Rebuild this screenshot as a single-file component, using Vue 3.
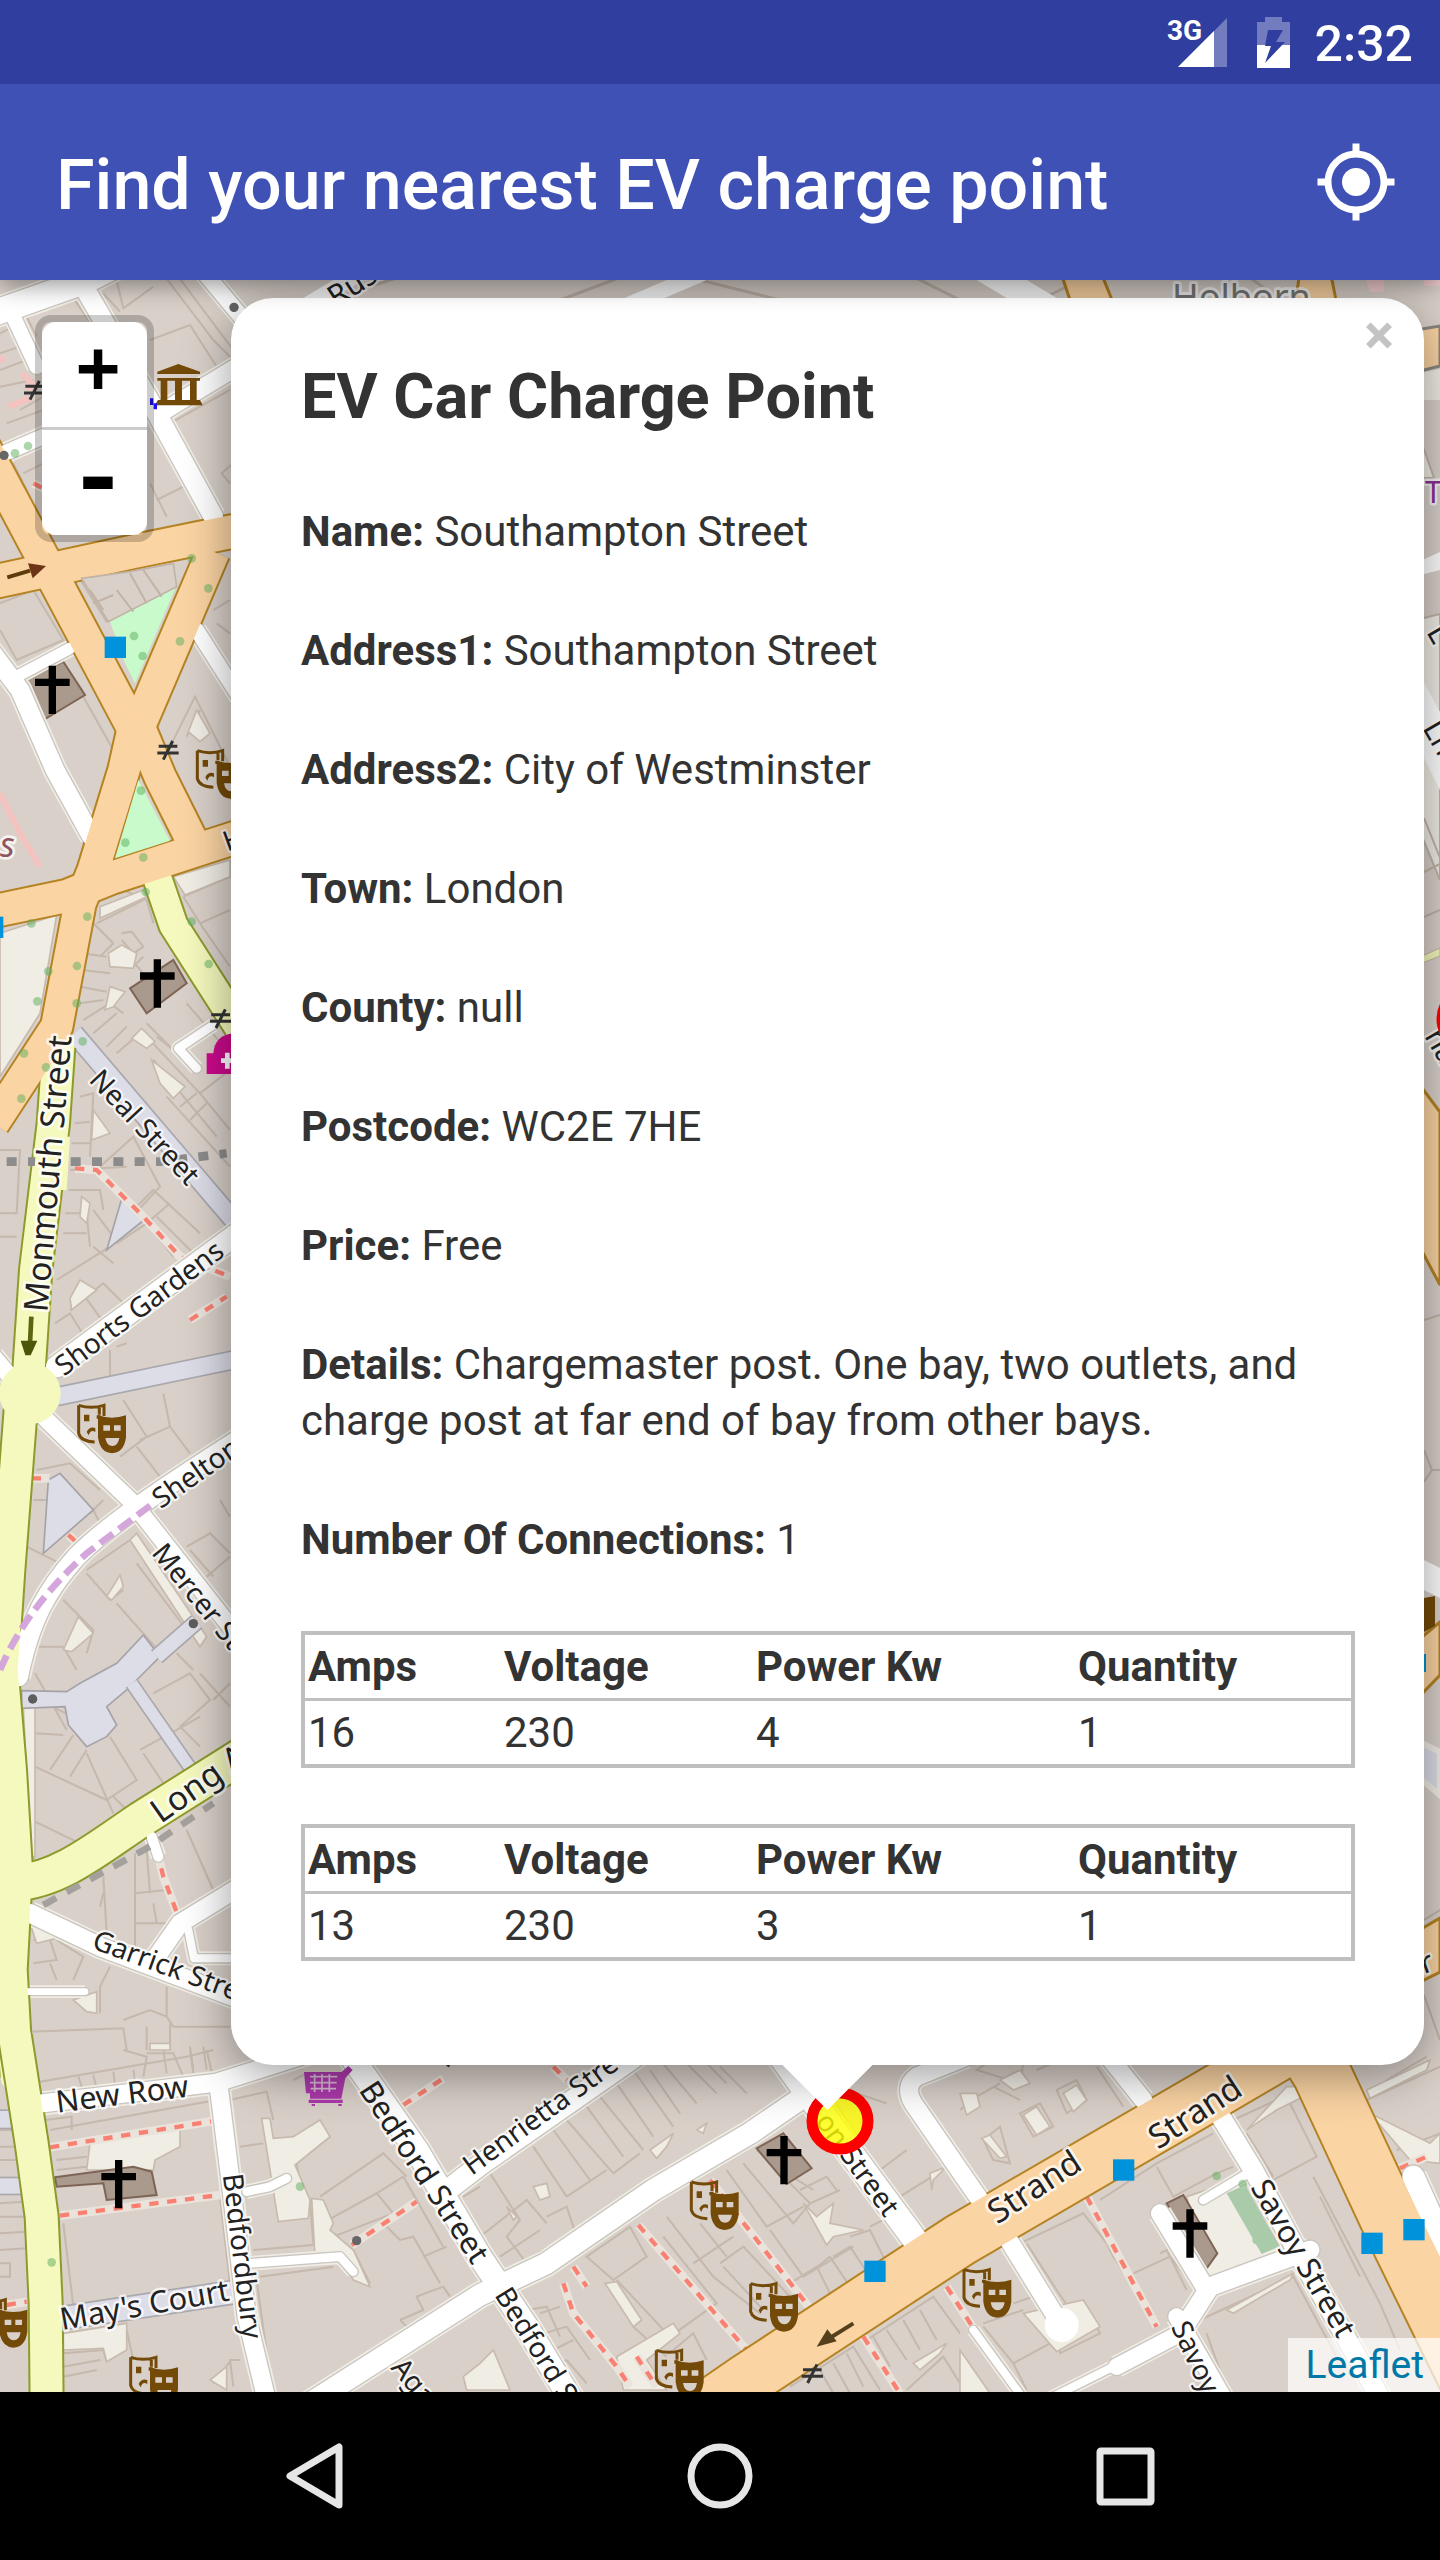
<script setup>
const fields = [
  { label: 'Name', value: 'Southampton Street' },
  { label: 'Address1', value: 'Southampton Street' },
  { label: 'Address2', value: 'City of Westminster' },
  { label: 'Town', value: 'London' },
  { label: 'County', value: 'null' },
  { label: 'Postcode', value: 'WC2E 7HE' },
  { label: 'Price', value: 'Free' },
  {
    label: 'Details',
    value: 'Chargemaster post. One bay, two outlets, and charge post at far end of bay from other bays.'
  },
  { label: 'Number Of Connections', value: '1' }
]

const connections = [
  { amps: 16, voltage: 230, power: 4, quantity: 1 },
  { amps: 13, voltage: 230, power: 3, quantity: 1 }
]

// Street geometry, in two sheets: the western strip and the southern strip.
const west = {
  plots: [
    'M80 140L220 85L330 240M80 140L110 200M270 60L440 -20M340 -10L370 115L460 50M310 70L360 125M450 210L570 165L650 290M480 0L640 210L700 270M520 0L700 240',
    'M0 190L40 170L90 260M0 250L60 230M0 300L80 270M0 350L100 330M60 420L130 380M20 460L130 420M70 610L130 580M40 580L90 680M450 640L500 740M470 690L570 640M510 460L610 680M510 460L690 360M700 580L665 610L690 640',
    'M245 935L310 925L325 960L380 950L410 1010L320 1055ZM280 1000L330 980M350 970L400 1030M390 910L440 1000M430 895L480 980M470 885L520 960M270 960L310 1010M640 1020L690 990M650 1060L690 1090',
    'M0 1000L100 960L190 1110L50 1170L0 1080M250 1280L340 1440M130 1350L190 1500M475 1500L585 1280L690 1490M560 1400L600 1320',
    'M300 1830L440 1890L460 1960M290 1960L430 1890M280 1960L340 2020M340 2020L300 2060M245 2050L320 2060M245 2100L330 2110M240 2150L320 2165M240 2200L310 2190M250 2250L330 2200L370 2230M280 2290L350 2230M320 2330L380 2270M350 2350L420 2290',
    'M365 1990L395 1985L430 2030L400 2050L365 2010M380 2050L470 2160M400 2090L430 2060M550 1880L690 1820M550 1880L600 1960L690 1920M600 1960L690 2090M0 2040L65 2050L60 2150L0 2400',
    'M440 2260L520 2340L470 2300M460 2370L650 2600M560 2200L690 2350M640 2330L690 2300M440 2300L600 2470L690 2400M600 2470L690 2580M500 2480L690 2690M540 2510L590 2470M570 2550L620 2500',
    'M240 2480L280 2470L270 2660M225 2560L270 2555M215 2620L270 2620M210 2700L380 2690M205 2760L300 2760L310 2820M195 2830L260 2830L270 2930M190 2890L260 2890M300 2690L400 2600L480 2750L340 2900L280 2820M0 2640L60 2640L50 2830L0 2830M0 2900L50 2900',
    'M400 2820L460 2760L600 2890M440 2860L510 2800M350 2920L440 2860L520 2960M280 2930L340 2980M470 2840L590 2960',
    'M170 3030L330 2930M210 3120L310 3040L390 3120M240 3060L320 3170M165 3160L210 3130L260 3210M330 3170L380 3110M330 3240L330 3330M350 3230L380 3220',
    'M370 3390L440 3500L360 3560M420 3510L510 3470L570 3550M410 3530L480 3620M490 3370L510 3470M310 3690L270 3730M100 3690L140 3690M110 3600L210 3580L300 3660M80 3830L180 3880M280 3720L310 3780M660 3690L690 3740M560 3830L630 3790L690 3850M620 3920L690 3860M570 3840L640 3920',
    'M260 3900L390 3810M260 3910L330 3990L370 3960M350 4000L500 4170M190 3990L280 4080L260 4150M110 4130L190 4130M190 4130L230 4200M410 3880L560 4080M530 4150L580 4200',
    'M105 4285L310 4385M105 4210L200 4380M105 4390L190 4395M150 4500L220 4395M210 4520L260 4440M260 4450L340 4630M330 4400L410 4530L320 4590M105 4490L320 4590M340 4580L380 4620M105 4655L240 4720M100 4290V4770',
    'M430 4450L490 4540M420 4440L530 4380L600 4340M460 4270L570 4210L630 4290L540 4370M600 4210L690 4310M640 4290L690 4240M540 4370L600 4430M560 4680L640 4860M405 4750V5050M440 4740L450 4870M405 4870L500 4860M460 4900L470 4960M405 4960L500 4960M310 4820L320 4990',
    'M310 4870L300 4910M100 5010L150 5010L170 5070L100 5080M170 5010L250 5060L220 5130M150 5080L170 5130M330 5090L300 5150L300 5230M500 5150V5240M90 5285L370 5275L380 5340M370 5250L450 5220L500 5240L520 5270H690M440 5270V5340M510 5260V5340M570 5330L580 5400M610 5330L620 5400'
  ],
  courts: [
    'M590 1320L630 1390L600 1415L565 1385Z', 'M325 2050L365 2025L410 2050L400 2095L330 2090Z', 'M330 2150L375 2165L340 2210L315 2220Z',
    'M395 2305L425 2275L465 2315L440 2335Z', 'M455 2370L555 2450L520 2485L480 2440Z', 'M280 2520L330 2590L275 2610Z',
    'M0 1990L170 1935L120 2230L0 2420ZM300 1910L430 1860L440 1880L300 1945Z', 'M520 1820L690 1770V1820L555 1875Z',
    'M210 3085L240 3030L290 3060L215 3120Z', 'M190 4140L235 4040L280 4090L215 4145Z', 'M320 3980L360 3915L370 3950L335 3990Z',
    'M220 5190L290 5165V5230L260 5225Z', 'M70 4310L105 4270V4760L90 4760Z', 'M90 4960L190 5000L110 5020Z',
    'M410 3790L620 4100L600 4130L390 3810Z', 'M245 2780L270 2800L260 2860L240 2840ZM450 5320H510V5340H450Z'
  ],
  ped: [
    { d: 'M222 2290L700 2850', w: 52 }, { d: 'M170 3380L700 3270', w: 50 }, { d: 'M395 4240L575 4500', w: 34 }, { d: 'M470 4160L590 4055', w: 42 }
  ],
  pedAreas: [
    'M145 3630L180 3610L280 3720L130 3850Z', 'M65 4262L200 4265L240 4240L350 4180L430 4095L480 4160L440 4200L380 4260L320 4310L350 4365L320 4400L260 4430L205 4365L195 4310L65 4315Z',
    'M370 2770L432 2850L320 2940Z'
  ],
  minor: [
    { d: 'M-20 130L250 35L400 -40', w: 76 }, { d: 'M40 140L110 290', w: 44 }, { d: 'M240 30L470 430L640 740', w: 58 }, { d: 'M480 430L720 285', w: 52 },
    { d: 'M-10 560L140 495', w: 46 }, { d: 'M590 -20L740 160', w: 48 }, { d: 'M-30 1140L60 1260L165 1500L275 1700', w: 56 },
    { d: 'M40 1225L210 1135', w: 34 }, { d: 'M590 1080L730 1300', w: 44 }, { d: 'M170 3290L720 2885', w: 64 }, { d: 'M-20 3260L140 3450L400 3700L730 4120', w: 50 },
    { d: 'M55 4220C90 4050 140 3960 230 3860C300 3790 400 3710 730 3500', w: 58 }, { d: 'M90 4930L300 5030L740 5195', w: 56 },
    { d: 'M470 5060L540 4960L720 4850', w: 54 }, { d: 'M565 4980L582 5065H720', w: 24 }, { d: 'M75 5165H255', w: 20 }, { d: 'M640 2265L535 2335L590 2395', w: 26 }, { d: 'M455 4700L475 4760', w: 30 }
  ],
  orange: [
    { d: 'M-118 400L400 1375', w: 97 }, { d: 'M-20 936L400 845L730 778', w: 98 }, { d: 'M640 845L420 1360L410 1420', w: 98 },
    { d: 'M410 1330L372 1500L280 1800L240 1900L170 2270L-20 2560', w: 94 }, { d: 'M405 1340L480 1520L575 1710', w: 94 }, { d: 'M-20 1924L200 1878L330 1825L730 1695', w: 96 }
  ],
  yellow: [
    { d: 'M472 1825L520 1965L715 2270', w: 84 }, { d: 'M176 2330L160 2560L107 3000L85 3330', w: 94 },
    { d: 'M62 3420L25 3900L5 4200L30 4500L48 4800L32 5100L50 5420', w: 96 }, { d: 'M50 4838C180 4830 300 4730 420 4650L730 4455', w: 104 }
  ],
  greens: ['M330 1055L530 945L405 1240L375 1180Z', 'M415 1530L510 1712L345 1765Z'],
  churches: ['M75 1230L190 1175L255 1275L130 1350Z', 'M390 2155L520 2070L560 2140L440 2230Z'],
  paths: ['M100 640L200 690', 'M225 2695L290 2700L430 2840L540 2960L690 3020', 'M570 3150L680 3080', 'M95 3625H150', 'M205 3795L250 3835', 'M458 4690L490 4820L535 4940'],
  labels: [
    { t: 'Monmouth Street', x: 142, y: 3128, a: -85, s: 100 }, { t: 'Neal Street', x: 264, y: 2432, a: 47, s: 84 },
    { t: 'Shorts Gardens', x: 192, y: 3320, a: -37, s: 84 }, { t: 'Shelton', x: 482, y: 3718, a: -35, s: 84 },
    { t: 'Mercer St', x: 452, y: 3850, a: 51, s: 84 }, { t: 'Long A', x: 482, y: 4662, a: -35, s: 100 },
    { t: 'Garrick Stre', x: 272, y: 5034, a: 20, s: 84 }, { t: 'H', x: 682, y: 1745, a: -20, s: 84 }
  ],
  masks: [[588, 1438], [232, 3402]],
  crosses: [[157, 1187], [472, 2068]],
  stops: [[314, 1100], [-54, 1940]],
  gates: [[72, 335], [472, 1415], [630, 2220]],
  trees: [[45, 550], [84, 528], [402, 1098], [428, 1158], [540, 1114], [575, 865], [625, 955], [423, 1562], [376, 1718], [430, 1762], [262, 1940], [94, 1960], [231, 2088], [145, 2104], [112, 2194], [230, 2200], [72, 2350], [138, 2392], [64, 2486], [248, 2314], [437, 1866], [626, 2082], [575, 1955]]
}

const south = {
  plots: [
    'M120 95L560 20L640 0M370 0L440 20L430 80M440 10L520 10L550 80M490 0L500 70M570 0L580 70M620 0L635 65M235 80L250 125M280 75L290 115M340 65L345 105M400 60L405 95M150 240L650 150M135 210L215 200V240M170 330L260 320M170 360L260 350',
    'M0 240L40 240M0 290L50 290M0 330H60M0 460L75 455M0 500H80M0 550L80 545M0 600L80 595M0 640H30V680H0',
    'M180 505L660 440L690 700L220 770L190 520M690 150L800 125L820 210M720 290L790 280M760 600L940 585M780 680L1000 650M770 690L815 1020M720 930L690 930L700 1010M640 1000L690 935M190 910L310 900L320 935M190 950L300 930M190 980L290 960M380 840L400 930',
    'M880 90L920 70M990 260L890 340L900 400M930 450L940 580M960 440L1150 310L1220 380M985 510L1130 430L1180 490M1130 430L1210 380L1330 590M1180 490L1000 560M1150 520L1200 570L1240 560L1320 700M1060 600L1110 700M1270 620L1340 590M1200 810L1270 780L1250 740L1330 710L1350 740M1200 810L1220 830M1390 440L1440 410M1380 450L1440 540',
    'M1440 560L1580 450L1640 520M1470 370L1560 510L1520 560L1580 640M1500 620L1620 540M1560 640L1700 560M1600 290L1700 440M1660 240L1770 390M1700 210L1840 370M1760 170L1870 320M1800 140L1930 300M1850 100L1960 260M1900 60L2020 230M1950 60L2040 190M1980 30L2090 160M2050 30L2150 130M2100 20L2180 100M1700 440L1820 360M1840 370L1920 310M2160 50L2240 130M1640 500L1700 470L1740 590',
    'M1760 620L1890 530L1940 620L1840 690ZM1850 690L2010 860L2150 760L1990 560M1940 560L1990 620M1580 780L1640 770L1680 860M1620 790L1680 770M1600 860L1700 830L1770 930M1660 900L1720 870M1700 930L1760 1000M1580 860L1660 950L1700 930M1900 830L2000 920M2020 900L2080 850L2120 930',
    'M2000 500L2140 680L2280 790M2100 520L2180 620M2080 640L2200 560M2160 640L2230 590L2370 740M2170 650L2290 780M2180 360L2300 530L2410 470M2230 340L2380 520L2430 460L2270 300M2310 540L2410 680L2560 590M2370 700L2450 650L2500 750M2440 660L2490 620L2550 710M2500 620L2550 590L2610 680M2550 560L2610 540L2660 640M2610 530L2670 500',
    'M2400 420L2480 380L2510 420M2430 460L2520 420M2500 150L2640 360L2700 440L2860 340M2540 120L2660 160M2640 360L2720 300M2360 370L2440 420',
    'M2370 1010L2560 890L2640 1020M2600 870L2800 740L2880 850M2620 860L2670 950M2660 840L2720 930M2710 810L2760 900M2760 780L2810 870M2540 910L2590 1010M2500 940L2550 1030M2460 960L2500 1030M2720 1020L2830 920L2880 1000',
    'M2880 180L2930 140L3000 100M2930 60L2990 20L3070 40L3060 100ZM2980 110L3060 150M2990 40L3050 20M3170 120L3230 90L3260 150L3200 190ZM3060 190L3120 160L3160 230L3100 260ZM2950 270L3000 230L3030 340L2980 330ZM3110 60L3180 30M3290 50L3370 170',
    'M3300 450L3470 340L3640 250M3470 350L3520 440L3650 370L3700 350M3480 610L3500 600L3560 720M3400 670L3510 620M3510 620L3590 720M3060 580L3250 490L3320 580L3340 620L3390 690M3080 580L3170 720L3260 850M3160 720L3180 910L3300 850L3250 750M3040 760L3100 740M2950 820L3070 780M3040 940L3150 880M2950 830L3040 940L3080 1020',
    'M3700 210L3830 150L3870 160L3950 320L3820 390L3700 210M3740 250L3820 380M3600 810L3880 680L4010 920M3620 850L3680 1020M3940 380L4140 760L4200 900M3960 440L4080 680M4100 150L4320 50M4190 300L4320 250M4210 260L4230 320L4300 280M4130 130L4160 90L4280 20'
  ],
  courts: [
    'M270 280L540 230V290L465 330L460 360H260Z', 'M785 205H810L820 265L880 260L960 210L990 260L885 345L930 450L925 505L835 515Z', 'M935 445L970 450L1000 520L990 540L1060 600L1110 710L1060 690L1020 620H945Z',
    'M190 850L380 820V900L320 935L310 895L190 900Z', 'M1390 980L1440 940L1480 900L1530 1020H1400Z', 'M1815 700L1850 695L1925 810L1900 830Z', 'M1850 920L2020 820L2040 850L1940 930L2000 1020H1870Z',
    'M1600 410L1640 400L1650 440L1620 450ZM1520 470L1550 500L1540 510ZM1950 300L2020 250L2000 290L1970 325ZM2090 240L2120 220L2110 250Z',
    'M2410 460L2450 500L2500 460L2490 520L2590 540L2500 560L2480 585Z', 'M2790 370L2840 350L2800 390L2795 420Z', 'M1720 1020L1620 880L1590 900L1700 1020ZM2740 940L2840 880L2820 910L2760 960Z',
    'M2880 130L2930 130L2940 170L2900 195ZM3000 90L3060 60L3090 100L3040 120ZM3190 130L3230 105L3260 150L3220 185ZM3070 195L3110 170L3150 230L3110 255ZM2945 265L2970 255L3020 320L3000 325Z',
    'M3560 440L3710 390L3860 620L3630 700Z', 'M3070 790L3250 750L3300 830L3170 905Z', 'M3680 780L3880 670L3870 690L3700 790Z', 'M3740 240L3830 180L3890 150L3960 110L3860 110Z', 'M2880 900L2970 1030H2880Z',
    'M4100 120L4290 30L4280 60L4110 145ZM4110 190L4290 280L4320 250V340L4230 330Z', 'M630 990L680 950V1020ZM2990 420L3380 200V230L3000 460Z'
  ],
  ped: [{ d: 'M185 805L710 725', w: 66 }, { d: 'M-10 208H40', w: 50 }, { d: 'M-10 408H80', w: 46 }],
  pedAreas: [],
  minor: [
    { d: 'M110 162L650 98L960 0', w: 54 }, { d: 'M655 100L690 380L740 800L800 1050', w: 54 }, { d: 'M750 640L1020 620L1060 665', w: 26 }, { d: 'M740 425L810 410L860 385', w: 26 },
    { d: 'M1040 0L1250 300L1440 620L1500 710L1580 830L1720 1060', w: 70 }, { d: 'M930 1060L1440 735L1640 640L1960 420L2250 250L2440 120', w: 64 },
    { d: 'M1330 430L1440 345L1920 10', w: 62 }, { d: 'M2300 -40L2480 210L2760 590', w: 74 }, { d: 'M2900 20L2750 80Q2710 110 2740 160L2940 450', w: 54 },
    { d: 'M3310 0L3430 150', w: 54 }, { d: 'M3650 180L3760 360L3900 620L4150 1060', w: 58 }, { d: 'M3610 450L3735 375', w: 26 }, { d: 'M3930 600L3630 710L3540 850', w: 56 },
    { d: 'M3480 490L3620 720', w: 54 }, { d: 'M3540 850L3350 950', w: 50 }, { d: 'M3340 950L3120 1060', w: 24 }, { d: 'M3020 560L3180 820', w: 54 }, { d: 'M2920 840L3080 1060', w: 24 },
    { d: 'M3530 800L3680 1060', w: 50 }, { d: 'M4240 380L4340 600', w: 66 }
  ],
  orange: [{ d: 'M2080 1100L2240 990L2880 570L3620 140L3960 -60', w: 154 }, { d: 'M3890 -50L3965 70L4165 500L4460 1100', w: 172 }],
  yellow: [{ d: 'M45 -40L95 280L125 500L137 760L140 1060', w: 96 }],
  greens: [],
  churches: ['M165 382L400 350L455 365L470 435L320 450L310 400L170 410Z', 'M2270 295L2350 250L2435 355L2360 402Z', 'M3500 460L3550 435L3652 610L3620 655Z'],
  paths: ['M150 292L640 213', 'M180 497L660 435', 'M1210 165L1330 85', 'M1055 585L1250 455', 'M1915 525L2240 900', 'M2130 390L2430 775', 'M1690 700L1720 790L1850 950L1890 1010', 'M1720 650L1760 710', 'M1910 920L1970 1010', 'M2690 520L2750 570', 'M2590 860L2700 1030', 'M2840 710L2930 850', 'M3260 440L3470 830', 'M20 765L80 755', 'M1660 50L1700 90', 'M4200 355L4280 320'],
  labels: [
    { t: 'New Row', x: 172, y: 188, a: -7, s: 92 }, { t: 'Bedfordbury', x: 668, y: 374, a: 83, s: 84 }, { t: "May's Court", x: 186, y: 840, a: -10, s: 92 },
    { t: 'Bedford Street', x: 1075, y: 120, a: 57, s: 92 }, { t: 'Henrietta Stre', x: 1415, y: 378, a: -36, s: 84 }, { t: 'Bedford S', x: 1482, y: 735, a: 58, s: 84 },
    { t: 'Aga', x: 1170, y: 955, a: 50, s: 84 }, { t: 'on Street', x: 2655, y: 505, a: 54, s: 84, end: true }, { t: 'Strand', x: 2992, y: 524, a: -33, s: 100 },
    { t: 'Strand', x: 3474, y: 300, a: -33, s: 100 }, { t: 'Savoy Street', x: 3750, y: 412, a: 60, s: 92 }, { t: 'Savoy', x: 3512, y: 830, a: 65, s: 84 }
  ],
  masks: [[2070, 392], [2248, 697], [1965, 897], [388, 918], [-64, 745], [2888, 655]],
  crosses: [[356, 330], [2352, 258], [3570, 478]],
  stops: [[3339, 328], [2593, 632], [4084, 548], [4210, 507]],
  gates: [[1325, -4], [2405, 945]],
  trees: [[155, 637], [900, 410], [3650, 378], [3728, 402], [3770, 570]]
}

const sheets = [
  { id: 'west', at: 'translate(0 270) scale(0.33333)', map: west },
  { id: 'south', at: 'translate(0 2050) scale(0.33333)', map: south }
]
const spots = (list) => list.map(([x, y]) => `translate(${x} ${y})`)
</script>

<template>
  <div class="screen">
    <header>
      <div class="status-bar">
        <svg class="signal" viewBox="0 0 60 50" role="img" aria-label="3G signal">
          <path d="M11 50L60 1V50Z" fill="#fff" fill-opacity=".32" />
          <path d="M11 50L47 14V50Z" fill="#fff" />
          <text x="0" y="23" class="signal-text">3G</text>
        </svg>
        <svg class="battery" viewBox="0 0 33 51" role="img" aria-label="Battery charging">
          <path d="M8 0H25V5H33V28H0V5H8Z" fill="#fff" fill-opacity=".32" />
          <path d="M0 28H33V51H0Z" fill="#fff" />
          <path d="M11 13H26L19 25H28L8 46L14 29H8Z" fill="#303f9f" />
        </svg>
        <span class="clock">2:32</span>
      </div>
      <div class="app-bar">
        <h1>Find your nearest EV charge point</h1>
        <button class="locate" type="button" aria-label="Find my location">
          <svg viewBox="0 0 24 24">
            <path fill="#fff" d="M12 8c-2.21 0-4 1.79-4 4s1.79 4 4 4 4-1.79 4-4-1.79-4-4-4zm8.94 3A8.994 8.994 0 0 0 13 3.06V1h-2v2.06A8.994 8.994 0 0 0 3.06 11H1v2h2.06A8.994 8.994 0 0 0 11 20.94V23h2v-2.06A8.994 8.994 0 0 0 20.94 13H23v-2h-2.06zM12 19c-3.87 0-7-3.13-7-7s3.13-7 7-7 7 3.13 7 7-3.13 7-7 7z" />
          </svg>
        </button>
      </div>
    </header>

    <main class="map">
      <svg class="tiles" viewBox="0 280 1440 2112" preserveAspectRatio="xMidYMid slice" aria-hidden="true">
        <defs>
          <symbol id="masks" viewBox="0 0 148 150" width="148" height="150" overflow="visible">
            <path d="M4 4Q42 16 80 4V36M4 4V88Q10 112 52 114M66 12V32" fill="none" stroke="#734a08" stroke-width="9" />
            <path d="M20 32H36V52H20ZM58 34H70V44H58ZM28 84Q36 66 54 72V84Q40 74 34 94Z" fill="#734a08" />
            <path d="M62 34Q104 48 146 34V100Q140 146 104 148Q68 146 62 100Z" fill="#734a08" />
            <path d="M78 64H98V80H78ZM110 64H130V80H110ZM84 102H126Q122 126 105 126Q88 126 84 102Z" fill="#d9d0c9" />
          </symbol>
        </defs>
        <rect y="270" width="1440" height="2130" fill="#d9d0c9" />

        <g v-for="sheet in sheets" :key="sheet.id" :transform="sheet.at" fill="none">
          <path v-for="d in sheet.map.plots" :key="d" :d="d" stroke="#c5b8ac" stroke-width="6" />
          <path v-for="d in sheet.map.courts" :key="d" :d="d" fill="#f0ede5" stroke="#c8bbae" stroke-width="5" />
          <path v-for="d in sheet.map.pedAreas" :key="d" :d="d" fill="#dddde8" stroke="#a5a3a8" stroke-width="5" />
          <path v-for="d in sheet.map.churches" :key="d" :d="d" fill="#aa9a8d" stroke="#7d6455" stroke-width="6" />
          <path v-for="r in sheet.map.ped" :key="r.d" :d="r.d" stroke="#a9a8ad" :stroke-width="r.w + 10" />
          <path v-for="r in sheet.map.ped" :key="r.d" :d="r.d" stroke="#dddde8" :stroke-width="r.w" />
          <path v-for="d in sheet.map.paths" :key="d" :d="d" stroke="#e9e3dc" stroke-width="26" />
          <path v-for="d in sheet.map.paths" :key="d" :d="d" stroke="#fa8072" stroke-width="13" stroke-dasharray="28 26" />
          <g stroke-linejoin="round">
            <path v-for="r in sheet.map.minor" :key="r.d" :d="r.d" stroke="#f0ede5" :stroke-width="r.w + 18" />
            <path v-for="r in sheet.map.minor" :key="r.d" :d="r.d" stroke="#c9c5bf" :stroke-width="r.w + 8" stroke-linecap="round" />
            <path v-for="r in sheet.map.yellow" :key="r.d" :d="r.d" stroke="#8d9a2c" :stroke-width="r.w + 12" />
            <path v-for="r in sheet.map.orange" :key="r.d" :d="r.d" stroke="#b58322" :stroke-width="r.w + 12" />
            <path v-for="r in sheet.map.minor" :key="r.d" :d="r.d" stroke="#fff" :stroke-width="r.w" stroke-linecap="round" />
            <path v-for="r in sheet.map.yellow" :key="r.d" :d="r.d" stroke="#f5f9bd" :stroke-width="r.w" stroke-linecap="round" />
            <path v-for="r in sheet.map.orange" :key="r.d" :d="r.d" stroke="#fbd4a3" :stroke-width="r.w" />
          </g>
          <path v-for="d in sheet.map.greens" :key="d" :d="d" fill="#c8facc" />
          <circle v-for="[x, y] in sheet.map.trees" :key="`${x}-${y}`" :cx="x" :cy="y" r="13" fill="#5cad5c" fill-opacity=".5" />
        </g>

        <!-- one-off features of the western strip -->
        <g transform="translate(0 270) scale(0.33333)" fill="none">
          <circle cx="90" cy="3370" r="92" fill="#f5f9bd" />
          <path d="M245 925L390 905L520 880L530 950L325 1055Z" fill="#d9d0c9" stroke="#c2b3a7" stroke-width="5" />
          <path d="M280 1000L340 975M350 960L400 1025M390 910L440 1000M430 900L485 980M270 960L310 1020" stroke="#c2b3a7" stroke-width="6" />
          <path d="M0 4200C60 4060 150 3950 260 3850L460 3700" stroke="#d5a6dc" stroke-width="20" stroke-dasharray="48 22" />
          <path d="M130 4905L440 4735L640 4600" stroke="#a3a09d" stroke-width="20" stroke-dasharray="44 36" />
          <path d="M20 2675H480L680 2650" stroke="#8c8c8c" stroke-width="26" stroke-dasharray="30 34" />
          <path d="M110 2600L210 2600L200 2760L100 2760Z" fill="#f5f9bd" />
          <path d="M22 922L90 902" stroke="#5c3c0c" stroke-width="12" />
          <path d="M84 880L138 888L98 925Z" fill="#6d3518" />
          <path d="M94 3140L90 3220" stroke="#5b6410" stroke-width="14" />
          <path d="M62 3212H112L92 3256H76Z" fill="#4b5608" />
          <path d="M472 305L535 282L600 305V312H472ZM472 324H600V332H472ZM482 332H502V392H482ZM525 332H546V392H525ZM570 332H590V392H570ZM474 390H600L608 406H464Z" fill="#734a08" />
          <path d="M455 385V405M466 400V418" stroke="#1c10f0" stroke-width="10" />
          <path d="M620 2350H640Q645 2295 700 2290V2412H620Z" fill="#cc0a8c" />
          <path d="M663 2372H700M682 2348V2396" stroke="#fff" stroke-width="14" />
          <circle cx="98" cy="4287" r="14" fill="#5d5d5d" />
          <circle cx="580" cy="4061" r="14" fill="#5d5d5d" />
          <circle cx="12" cy="556" r="14" fill="#666" />
          <circle cx="702" cy="112" r="14" fill="#666" />
          <path d="M0 260L12 275M65 310L100 345L85 360M25 410L90 385M0 1570L60 1690L120 1790" stroke="#f4c3c0" stroke-width="18" />
        </g>

        <!-- one-off features of the southern strip -->
        <g transform="translate(0 2050) scale(0.33333)" fill="none">
          <circle cx="3185" cy="825" r="51" fill="#fff" />
          <path d="M3680 430L3735 405L3838 590L3785 612Z" fill="#aacbaa" />
          <path d="M2560 820L2480 870" stroke="#55401c" stroke-width="12" />
          <path d="M2482 838L2510 874L2450 890Z" fill="#55401c" />
          <path d="M912 66H1025L1045 48L1058 60L1036 84L1024 146H930V130H918Z" fill="#ac39ac" />
          <path d="M930 80H1012M930 98H1010M932 116H1008M944 72V126M966 72V126M988 72V126" stroke="#d9b9d4" stroke-width="5" />
          <path d="M926 154H1028M940 162V168M1020 162V168" stroke="#ac39ac" stroke-width="10" />
          <circle cx="1070" cy="572" r="14" fill="#666" />
        </g>

        <g v-for="sheet in sheets" :key="sheet.id" :transform="sheet.at">
          <path v-for="at in spots(sheet.map.gates)" :key="at" :transform="at" d="M4 14H60M0 34H64M18 54L46 -2" stroke="#333" stroke-width="9" />
          <text
            v-for="l in sheet.map.labels"
            :key="l.t + l.x"
            class="street"
            :font-size="l.s"
            :text-anchor="l.end ? 'end' : 'start'"
            :transform="`translate(${l.x} ${l.y}) rotate(${l.a})`"
          >{{ l.t }}</text>
          <rect v-for="at in spots(sheet.map.stops)" :key="at" :transform="at" width="64" height="64" fill="#0092da" />
          <path v-for="at in spots(sheet.map.crosses)" :key="at" :transform="at" d="M-11 0H11V39H52V61H11V145H-11V61H-52V39H-11Z" fill="#000" />
          <use v-for="at in spots(sheet.map.masks)" :key="at" :transform="at" href="#masks" />
        </g>
        <text class="street area" font-size="34" x="0" y="857">s</text>

        <!-- sliver of map above the popup -->
        <g>
          <path d="M330 300L420 270M560 300L640 270M700 280L780 300M900 270L960 300M1040 300L1100 270M1240 270L1280 300" stroke="#bfb2a7" stroke-width="3" />
          <path d="M300 300L350 270H380L330 300ZM620 300L690 270H730L660 300ZM960 270H1010L1060 300H1010Z" fill="#fff" />
          <path d="M1100 270L1112 300H1070L1060 270ZM1300 270H1330L1336 300H1296Z" fill="#fbd4a3" stroke="#b58322" stroke-width="3" />
          <path d="M1366 280H1384V292H1370ZM1424 278H1440V286H1424Z" fill="#f6d0d0" />
          <text class="street" font-size="30" transform="translate(336 308) rotate(-33)">Russ</text>
          <text class="street district" font-size="36" x="1172" y="310">Holborn</text>
        </g>

        <!-- eastern edge of the map -->
        <g>
          <path d="M1416 330L1440 326V366L1416 372Z" fill="#fbd4a3" stroke="#8c8880" stroke-width="3" />
          <path d="M1416 374L1440 369V400H1416Z" fill="#f0ede5" />
          <path d="M1420 438L1434 478H1420ZM1416 620L1440 614V880L1416 822Z" fill="#f0ede5" stroke="#c2b3a7" stroke-width="2" />
          <path d="M1416 563L1440 552V570L1416 576ZM1420 675L1440 712V790L1420 750Z" fill="#fff" />
          <path d="M1424 818L1440 858M1424 872L1440 864M1424 917L1440 910M1424 1320L1440 1315M1424 1450L1432 1470H1440M1432 1470L1424 1482M1424 1920L1440 1910M1424 1995L1440 2040" fill="none" stroke="#c2b3a7" stroke-width="2" />
          <path d="M1420 957L1440 948V956L1420 964Z" fill="#f5f9bd" stroke="#c2b3a7" />
          <path d="M1416 1080L1440 1112V1285L1416 1240Z" fill="#fbd4a3" stroke="#b58322" stroke-width="3" />
          <path d="M1416 1556L1440 1568V1598L1416 1586Z" fill="#fff" />
          <path d="M1416 1642L1440 1622V1675L1416 1700ZM1416 1932L1440 1918V1972L1416 1984Z" fill="#fbd4a3" stroke="#b58322" stroke-width="3" />
          <path d="M1416 1740L1440 1752V1795L1416 1775Z" fill="#dddde8" stroke="#f0ede5" stroke-width="6" />
          <path d="M1424 1598L1435 1596V1626L1424 1632Z" fill="#734a08" />
          <path d="M1424 1654H1426V1672H1424Z" fill="#0092da" />
          <text class="street" font-size="30" transform="translate(1426 632) rotate(60)">L</text>
          <text class="street" font-size="30" transform="translate(1422 728) rotate(60)">Ln</text>
          <text class="street" font-size="30" transform="translate(1424 1036) rotate(60)">har</text>
          <text class="street" font-size="30" transform="translate(1424 1974) rotate(-20)">r</text>
          <text class="street transit" font-size="30" x="1425" y="503">T</text>
        </g>

        <circle cx="840" cy="2121" r="28" fill="#ff0" fill-opacity=".8" stroke="#f00" stroke-width="11" />
        <circle cx="1470" cy="1019" r="28" fill="#ff0" fill-opacity=".8" stroke="#f00" stroke-width="11" />
      </svg>

      <div class="zoom">
        <button class="zoom-in" type="button" aria-label="Zoom in">+</button>
        <button class="zoom-out" type="button" aria-label="Zoom out">-</button>
      </div>

      <article class="popup">
        <button class="close" type="button" aria-label="Close popup">×</button>
        <h2>EV Car Charge Point</h2>
        <p v-for="f in fields" :key="f.label"><b>{{ f.label }}:</b> {{ f.value }}</p>
        <table v-for="c in connections" :key="c.amps">
          <thead>
            <tr>
              <th class="c-amps" scope="col">Amps</th>
              <th class="c-volt" scope="col">Voltage</th>
              <th class="c-power" scope="col">Power Kw</th>
              <th scope="col">Quantity</th>
            </tr>
          </thead>
          <tbody>
            <tr>
              <td>{{ c.amps }}</td>
              <td>{{ c.voltage }}</td>
              <td>{{ c.power }}</td>
              <td>{{ c.quantity }}</td>
            </tr>
          </tbody>
        </table>
      </article>

      <div class="attribution"><a href="#">Leaflet</a></div>
    </main>

    <nav class="system-nav" aria-label="System">
      <button type="button" aria-label="Back">
        <svg viewBox="0 0 72 72"><path d="M60 7V65L11 36Z" /></svg>
      </button>
      <button type="button" aria-label="Home">
        <svg viewBox="0 0 72 72"><circle cx="36" cy="36" r="29" /></svg>
      </button>
      <button type="button" aria-label="Recent apps">
        <svg viewBox="0 0 72 72"><rect x="11" y="11" width="51" height="51" rx="1" /></svg>
      </button>
    </nav>
  </div>
</template>

<style>
body {
  margin: 0;
  background: #000;
}
</style>

<style scoped>
.screen {
  display: flex;
  flex-direction: column;
  min-height: 100vh;
  font-family: Roboto, "Liberation Sans", sans-serif;
}
button {
  border: 0;
  padding: 0;
  background: none;
  font: inherit;
  color: inherit;
}
header {
  position: relative;
  z-index: 2;
  color: #fff;
  box-shadow: 0 4px 24px rgba(0, 0, 0, 0.45);
}
.status-bar {
  display: flex;
  align-items: center;
  justify-content: flex-end;
  height: 84px;
  padding-right: 27px;
  background: #303f9f;
}
.signal {
  width: 60px;
  height: 50px;
  overflow: visible;
}
.signal-text {
  font-size: 28px;
  font-weight: 700;
  fill: #fff;
}
.battery {
  width: 33px;
  height: 51px;
  margin: 0 25px 0 30px;
}
.clock {
  padding-top: 4px;
  font-size: 50px;
  font-weight: 500;
  line-height: 56px;
}
.app-bar {
  display: flex;
  align-items: center;
  justify-content: space-between;
  height: 196px;
  padding: 0 42px 0 56px;
  background: #3f51b5;
}
h1 {
  margin: 0;
  padding-top: 6px;
  font-size: 70px;
  font-weight: 500;
  line-height: 84px;
}
.locate,
.locate svg {
  display: block;
  width: 84px;
  height: 84px;
}
.map {
  position: relative;
  flex: 1;
  padding: 18px 16px 320px 231px;
  overflow: hidden;
}
.tiles {
  position: absolute;
  inset: 0;
  width: 100%;
  height: 100%;
}
.street {
  font-family: "Noto Sans", sans-serif;
  fill: #222;
  stroke: #fff;
  stroke-opacity: 0.75;
  stroke-width: 0.16em;
  stroke-linejoin: round;
  paint-order: stroke;
}
.area {
  fill: #8f5560;
  font-style: italic;
}
.district {
  fill: #777;
}
.transit {
  fill: #8b2f93;
}
.zoom {
  position: absolute;
  left: 35px;
  top: 35px;
  width: 105px;
  border: 7px solid rgba(0, 0, 0, 0.2);
  border-radius: 16px;
}
.zoom button {
  display: block;
  box-sizing: border-box;
  width: 100%;
  height: 105px;
  padding-left: 7px;
  background: #fff;
  color: #000;
  font-family: "Liberation Mono", monospace;
  font-weight: 700;
}
.zoom .zoom-in {
  height: 108px;
  border-bottom: 3px solid #ccc;
  border-radius: 14px 14px 0 0;
  font-size: 77px;
  line-height: 88px;
}
.zoom .zoom-out {
  border-radius: 0 0 14px 14px;
  font-size: 104px;
  line-height: 105px;
}
.popup {
  position: relative;
  padding: 55px 69px 104px 70px;
  border-radius: 42px;
  background: #fff;
  color: #333;
  font-size: 42px;
  line-height: 56px;
  box-shadow: 0 10px 49px rgba(0, 0, 0, 0.4);
}
.popup::after {
  content: "";
  position: absolute;
  left: 50%;
  top: 100%;
  width: 90px;
  height: 45px;
  margin-left: -45px;
  background: #fff;
  clip-path: polygon(0 0, 100% 0, 50% 100%);
}
.close {
  position: absolute;
  right: 18px;
  top: 9px;
  width: 54px;
  height: 56px;
  color: #c3c3c3;
  font-size: 56px;
  font-weight: 700;
}
h2 {
  margin: 0;
  font-size: 63px;
  font-weight: 700;
  line-height: 88px;
}
p {
  margin: 63px 0;
}
table {
  width: 100%;
  margin-top: 56px;
  border: 4px solid #bfbfbf;
  border-spacing: 0;
  table-layout: fixed;
}
p + table {
  margin-top: 63px;
}
th,
td {
  height: 63px;
  padding: 0 3px;
  text-align: left;
}
th {
  border-bottom: 3px solid #bfbfbf;
}
.c-amps {
  width: 190px;
}
.c-volt {
  width: 246px;
}
.c-power {
  width: 316px;
}
.attribution {
  position: absolute;
  right: 0;
  bottom: 0;
  padding: 0 16px 0 18px;
  background: rgba(255, 255, 255, 0.7);
  font-size: 39px;
  line-height: 54px;
}
.attribution a {
  color: #0078a8;
  text-decoration: none;
}
.system-nav {
  display: flex;
  align-items: center;
  justify-content: center;
  gap: 333px;
  height: 168px;
  background: #000;
}
.system-nav svg {
  display: block;
  width: 72px;
  height: 72px;
  fill: none;
  stroke: #e6e6e6;
  stroke-width: 7;
  stroke-linejoin: round;
}
</style>
